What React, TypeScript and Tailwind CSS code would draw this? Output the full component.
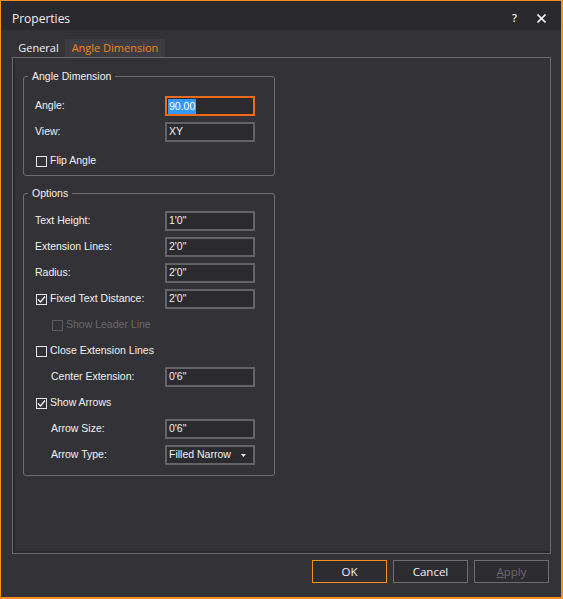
import React from 'react'

const labelFont = { fontFamily: '"Liberation Sans", Arial, sans-serif' }
const uiFont = { fontFamily: '"Open Sans", "Noto Sans", sans-serif' }

function TextBox({ value, focused = false }: { value: string; focused?: boolean }) {
  return (
    <div
      className={
        'w-[90px] h-[20px] flex items-center px-[1px] bg-[#2b2a2e] ' +
        (focused ? 'border-2 border-[#f06a1c]' : 'border-2 border-[#646366]')
      }
    >
      {focused ? (
        <span className="bg-[#3399ff] text-white leading-[15px] px-[1px]">{value}</span>
      ) : (
        <span className="text-[#f1f1f1] px-[1px]">{value}</span>
      )}
    </div>
  )
}

function Check({ checked = false, disabled = false }: { checked?: boolean; disabled?: boolean }) {
  return (
    <span
      className={
        'w-[11px] h-[11px] border flex items-center justify-center shrink-0 ' +
        (disabled ? 'border-[#5c5b5f]' : 'border-[#e6e6e6]')
      }
    >
      {checked && (
        <svg width="9" height="9" viewBox="0 0 9 9">
          <path d="M1 4.5 L3.5 7 L8 1.5" fill="none" stroke="#f1f1f1" strokeWidth="1.4" />
        </svg>
      )}
    </span>
  )
}

function FieldRow({ label, value, indent = false, focused = false }: { label: string; value: string; indent?: boolean; focused?: boolean }) {
  return (
    <div className="flex items-center h-[20px]">
      <span className={(indent ? 'w-[130px] pl-[16px]' : 'w-[130px]') + ' text-[#f1f1f1]'}>{label}</span>
      <TextBox value={value} focused={focused} />
    </div>
  )
}

function CheckRow({ label, checked = false, disabled = false, indent = false, value }: { label: string; checked?: boolean; disabled?: boolean; indent?: boolean; value?: string }) {
  return (
    <div className="flex items-center h-[20px]">
      <div className={'w-[130px] flex items-center gap-[3px] ' + (indent ? 'pl-[17px]' : 'pl-[1px]')}>
        <Check checked={checked} disabled={disabled} />
        <span className={disabled ? 'text-[#6a696d]' : 'text-[#f1f1f1]'}>{label}</span>
      </div>
      {value !== undefined && <TextBox value={value} />}
    </div>
  )
}

function Group({ title, children, className }: { title: string; children: React.ReactNode; className?: string }) {
  return (
    <div className={'relative w-[252px] border border-[#6e6d71] rounded-[3px] ' + (className || '')}>
      <span className="absolute left-[4px] -top-[8px] px-[4px] bg-[#333236] text-[#f1f1f1] leading-[14px]">
        {title}
      </span>
      {children}
    </div>
  )
}

export default function App() {
  return (
    <div className="w-[563px] h-[599px] bg-[#333236] border border-[#f7901e] border-b-2 border-r-2 flex flex-col text-[10.5px]" style={labelFont}>
      {/* Title bar */}
      <div className="h-[29px] bg-[#2a292d] flex items-center justify-between pl-[11px] pr-[15px] pt-[6px]" style={uiFont}>
        <span className="text-[12px] text-[#f1f1f1]">Properties</span>
        <div className="flex items-center gap-[20px] text-[#f1f1f1]">
          <span className="text-[11px] font-semibold">?</span>
          <svg width="9" height="9" viewBox="0 0 9 9">
            <path d="M0.5 0.5 L8.5 8.5 M8.5 0.5 L0.5 8.5" stroke="#f1f1f1" strokeWidth="1.6" />
          </svg>
        </div>
      </div>

      <div className="flex-1 flex flex-col pl-[11px] pr-[10px]">
        {/* Tabs */}
        <div className="flex mt-[9px] h-[18px] text-[11px]" style={uiFont}>
          <div className="w-[53px] flex items-center justify-center text-[#f1f1f1]">General</div>
          <div className="w-[100px] flex items-center justify-center bg-[#3d3c41] text-[#f0861c]">Angle Dimension</div>
        </div>

        {/* Panel */}
        <div className="h-[497px] border border-[#6a696d] shadow-[inset_2px_-2px_0_#2a292d] pl-[10px]">
          <Group title="Angle Dimension" className="mt-[18px] pl-[11px] pt-[19px] pb-[4px]">
            <FieldRow label="Angle:" value="90.00" focused />
            <div className="h-[6px]" />
            <FieldRow label="View:" value="XY" />
            <div className="h-[9px]" />
            <CheckRow label="Flip Angle" />
          </Group>

          <Group title="Options" className="mt-[17px] pl-[11px] pt-[17px] pb-[10px] flex flex-col gap-[6px]">
            <FieldRow label="Text Height:" value={'1\'0"'} />
            <FieldRow label="Extension Lines:" value={'2\'0"'} />
            <FieldRow label="Radius:" value={'2\'0"'} />
            <CheckRow label="Fixed Text Distance:" checked value={'2\'0"'} />
            <CheckRow label="Show Leader Line" disabled indent />
            <CheckRow label="Close Extension Lines" />
            <FieldRow label="Center Extension:" value={'0\'6"'} indent />
            <CheckRow label="Show Arrows" checked />
            <FieldRow label="Arrow Size:" value={'0\'6"'} indent />
            <div className="flex items-center h-[20px]">
              <span className="w-[130px] pl-[16px] text-[#f1f1f1]">Arrow Type:</span>
              <div className="w-[90px] h-[20px] border-2 border-[#646366] bg-[#2b2a2e] flex items-center justify-between pl-[2px] pr-[7px]">
                <span className="text-[#f1f1f1]">Filled Narrow</span>
                <svg width="5" height="3" viewBox="0 0 5 3">
                  <path d="M0 0 H5 L2.5 3 Z" fill="#f1f1f1" />
                </svg>
              </div>
            </div>
          </Group>
        </div>

        {/* Buttons */}
        <div className="flex justify-end gap-[6px] mt-[6px] pr-[2px] text-[11.5px]" style={uiFont}>
          <button className="w-[75px] h-[23px] border border-[#f7901e] bg-[#2d2c30] text-[#f1f1f1]">OK</button>
          <button className="w-[75px] h-[23px] border border-[#6e6d71] bg-[#2d2c30] text-[#f1f1f1]">Cancel</button>
          <button className="w-[75px] h-[23px] border border-[#6e6d71] bg-[#2d2c30] text-[#6a696d]">
            <span className="underline">A</span>pply
          </button>
        </div>
      </div>
    </div>
  )
}
